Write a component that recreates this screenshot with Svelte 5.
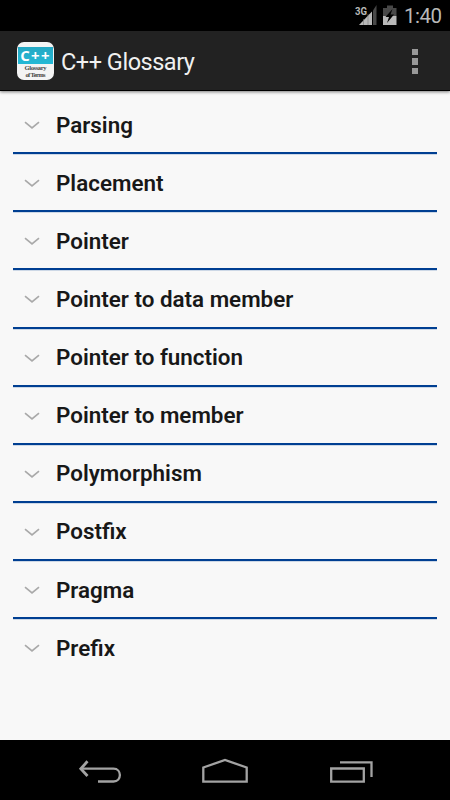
<script lang="ts">
	let terms: string[] = [
		'Parsing',
		'Placement',
		'Pointer',
		'Pointer to data member',
		'Pointer to function',
		'Pointer to member',
		'Polymorphism',
		'Postfix',
		'Pragma',
		'Prefix'
	];
</script>

<div class="screen">
	<div class="status-bar">
		<svg width="96" height="31" viewBox="354 0 96 31">
			<path d="M359 25 L372 11.500 V25Z" fill="#b9b9b9" />
			<path d="M373 10.500 L376.500 5 V25 H373Z" fill="#484848" />
			<path d="M363.500 19V25 M368 14V25" stroke="#777" stroke-width=".6" />
			<text class="network" x="355" y="14.500" textLength="12" lengthAdjust="spacingAndGlyphs">3G</text>
			<path d="M383 8H387V5.500H393V8H396.500V16H383Z" fill="#484848" />
			<path d="M383 16H396.500V25H383Z" fill="#b9b9b9" />
			<path d="M392.500 9L385.500 17H389L387 23L394 14.500H390.500Z" fill="#000" />
			<text class="clock" x="404" y="23" textLength="38">1:40</text>
		</svg>
	</div>

	<header>
		<div class="app-icon">
			<div class="icon-title">C++</div>
			<svg width="37" height="17" viewBox="0 0 37 17">
				<text x="18.500" y="6" textLength="22">Glossary</text>
				<text x="18.500" y="12.500" textLength="20">of Terms</text>
			</svg>
		</div>
		<h1>C++ Glossary</h1>
		<div class="overflow">
			<span></span>
			<span></span>
			<span></span>
		</div>
	</header>

	<main>
		{#each terms as term}
			<div class="term">
				<svg width="16" height="9" viewBox="0 0 16 9">
					<path d="M1 1.200 L8 6.800 L15 1.200" fill="none" stroke="#a9a9a9" stroke-width="1.700" />
				</svg>
				<span>{term}</span>
			</div>
		{/each}
	</main>

	<nav>
		<svg width="450" height="60" viewBox="0 740 450 60" fill="none" stroke="#a3a3a3" stroke-width="2.300">
			<path d="M81 768.700H113.500C122 768.700 122 781.500 113.500 781.500H98" />
			<path d="M87.500 761.300L80.800 768.700L87.500 776" stroke-width="2.800" />
			<path d="M203.300 767.500L225 760L246.700 767.500V781.600H203.300Z" />
			<path d="M331.200 768.500H363.800V781.600H331.200Z" />
			<path d="M340 762.400H371.500V777" />
		</svg>
	</nav>
</div>

<style>
	:global(body) {
		background: #000;
	}

	.screen {
		display: flex;
		flex-direction: column;
		width: 450px;
		height: 800px;
		overflow: hidden;
		background: #f8f8f8;
		font-family: Roboto, sans-serif;
	}

	svg {
		display: block;
		flex-shrink: 0;
	}

	.status-bar {
		display: flex;
		justify-content: flex-end;
		height: 31px;
		flex-shrink: 0;
		background: #000;
	}

	.status-bar text {
		fill: #b9b9b9;
	}

	.network {
		font-size: 11.5px;
		font-weight: 700;
	}

	.clock {
		font-size: 20.5px;
	}

	header {
		display: flex;
		align-items: center;
		box-sizing: border-box;
		height: 60px;
		flex-shrink: 0;
		padding: 0 32px 0 17px;
		background: #222;
		border-bottom: 1px solid #000;
		box-shadow: 0 1px 3px rgba(0, 0, 0, 0.5);
	}

	.app-icon {
		width: 37px;
		height: 38px;
		overflow: hidden;
		border-radius: 7px;
		background: #f4f4f4;
	}

	.icon-title {
		height: 17px;
		margin: 5px 1px 0;
		background: linear-gradient(#25a8c3, #24b9d6);
		color: #fff;
		font: 700 15px/17px "Open Sans", sans-serif;
		letter-spacing: 1.2px;
		text-align: center;
	}

	.app-icon text {
		fill: #444;
		font-family: "Liberation Serif", serif;
		font-size: 6.5px;
		font-weight: 700;
		text-anchor: middle;
	}

	h1 {
		margin: 2px 0 0 7px;
		color: #f0f0f0;
		font-size: 23.5px;
		font-weight: 400;
		letter-spacing: -0.48px;
		line-height: 30px;
		white-space: nowrap;
	}

	.overflow {
		display: grid;
		gap: 3px;
		margin: 2px 0 0 auto;
	}

	.overflow span {
		width: 6px;
		height: 6.5px;
		background: #999;
	}

	main {
		flex: 1;
		padding: 5px 13px 0;
	}

	.term {
		display: flex;
		align-items: center;
		box-sizing: border-box;
		height: 58.125px;
		padding: 2px 0 0 11px;
		border-bottom: 2px solid #003f92;
		box-shadow: 0 0.5px 0 rgba(0, 63, 146, 0.35);
		color: #181818;
		font-size: 22.4px;
		font-weight: 600;
		line-height: 28px;
	}

	.term svg {
		margin-top: 1px;
	}

	.term:last-child {
		border-bottom-color: transparent;
		box-shadow: none;
	}

	.term span {
		margin: -1px 0 0 16px;
		white-space: nowrap;
	}

	nav {
		height: 60px;
		flex-shrink: 0;
		background: #000;
	}
</style>
